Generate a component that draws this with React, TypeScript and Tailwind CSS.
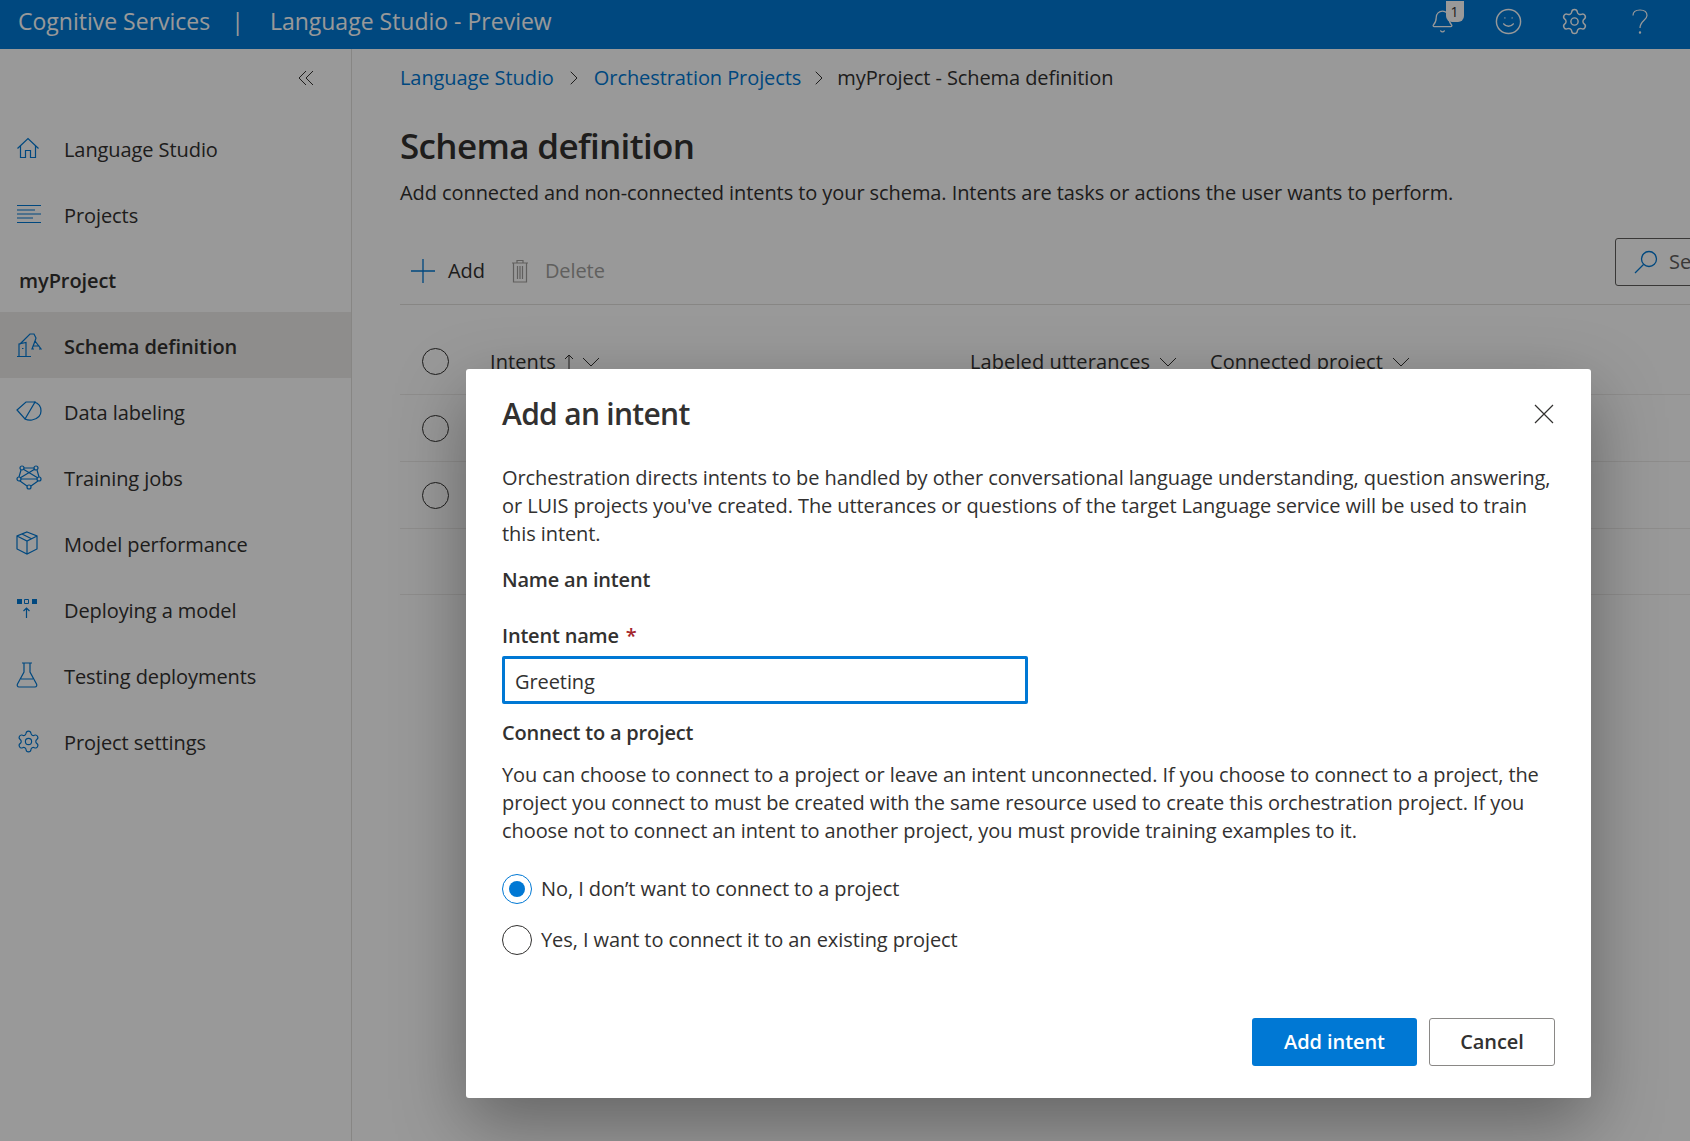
import { ChevronRight, Settings, Smile, Bell } from 'lucide-react'
import type { ReactNode } from 'react'

function HomeIcon() {
  return (
    <svg width="24" height="24" viewBox="0 0 24 24" fill="none" stroke="#0078d4" strokeWidth="1.2">
      <path d="M1.5 12.5 12 2.5l10.5 10M4.500 10v11.500h5v-7h5v7h5V10" />
    </svg>
  )
}

function ListIcon() {
  return (
    <svg width="26" height="20" viewBox="0 0 26 20" fill="none" stroke="#0078d4" strokeWidth="1.1">
      <path d="M1 1.500h24M1 6h18M1 10h24M1 14h16M1 18.500h24" />
    </svg>
  )
}

function RobotIcon() {
  return (
    <svg width="26" height="26" viewBox="0 0 26 26" fill="none" stroke="#0078d4" strokeWidth="1.2">
      <path d="M1 24.500h14M3 24V12l7-1.500V24M4 12l10-10 4 0 2 4-1 3M6 16.500h1.500" />
      <path d="M19 9l-3 8h2M19 9l6 8h-2M17.500 14h6" />
    </svg>
  )
}

function TagIcon() {
  return (
    <svg width="26" height="22" viewBox="0 0 26 22" fill="none" stroke="#0078d4" strokeWidth="1.2">
      <path d="M1 10 10 2h9l-10 17z" />
      <path d="M9 19c2 1 4 1.500 7 1 5-1 9-4 9-9 0-5-3-8-7-9" />
    </svg>
  )
}

function NetworkIcon() {
  return (
    <svg width="26" height="26" viewBox="0 0 26 26" fill="none" stroke="#0078d4" strokeWidth="1.2">
      <circle cx="6" cy="4" r="2" />
      <circle cx="20" cy="4" r="2" />
      <circle cx="3" cy="15" r="2" />
      <circle cx="23" cy="15" r="2" />
      <circle cx="13" cy="23" r="2" />
      <path d="M8 4h10M5 6l-2 7M21 6l2 7M7 5l15 9M19 5 4 14M5 15h16M4 17l7 5M22 17l-7 5" />
    </svg>
  )
}

function CubeIcon() {
  return (
    <svg width="22" height="24" viewBox="0 0 22 24" fill="none" stroke="#0078d4" strokeWidth="1.2">
      <path d="M11 1 21 5v13l-10 5-10-5V5zM1 5l10 5 10-5M11 10v13M6 3l10 5" />
    </svg>
  )
}

function DeployIcon() {
  return (
    <svg width="22" height="22" viewBox="0 0 22 22" fill="none">
      <path d="M1 1h5v5H1zM16 1h5v5h-5z" fill="#0078d4" />
      <path d="M8.500 1.500h4v4h-4z" stroke="#0078d4" />
      <path d="M10.500 20V10M7.500 13l3-3 3 3" stroke="#0078d4" strokeWidth="1.2" />
    </svg>
  )
}

function FlaskIcon() {
  return (
    <svg width="22" height="26" viewBox="0 0 22 26" fill="none" stroke="#0078d4" strokeWidth="1.2">
      <path d="M6 1h10M8 1v9L1.500 22c-.8 1.500 0 3 1.500 3h16c1.500 0 2.300-1.500 1.500-3L14 10V1M5 17h12" />
    </svg>
  )
}

function TrashIcon() {
  return (
    <svg width="18" height="24" viewBox="0 0 18 24" fill="none" stroke="#a19f9d" strokeWidth="1.2">
      <path d="M1 4h16M6 4V1.500h6V4M2.500 4v19h13V4M6.500 7v13M9 7v13M11.500 7v13" />
    </svg>
  )
}

function PlusIcon() {
  return (
    <svg width="24" height="24" viewBox="0 0 24 24" fill="none" stroke="#0078d4" strokeWidth="1.3">
      <path d="M12 0v24M0 12h24" />
    </svg>
  )
}

function SearchIcon() {
  return (
    <svg width="24" height="24" viewBox="0 0 24 24" fill="none" stroke="#0078d4" strokeWidth="1.3">
      <circle cx="15" cy="9" r="7.500" />
      <path d="M9.500 14.500 1 23" />
    </svg>
  )
}

function ChevDown() {
  return (
    <svg width="18" height="10" viewBox="0 0 18 10" fill="none" stroke="#323130" strokeWidth="1">
      <path d="M1 1l8 8 8-8" />
    </svg>
  )
}

function ArrowUpThin() {
  return (
    <svg width="10" height="16" viewBox="0 0 10 16" fill="none" stroke="#323130" strokeWidth="1">
      <path d="M5 16V1M1 5l4-4 4 4" />
    </svg>
  )
}

function QuestionMark() {
  return (
    <svg width="16" height="25" viewBox="0 0 16 25" fill="none" stroke="white" strokeWidth="1.2">
      <path d="M1 6.500C1 3 4 1 8 1s7 2 7 5.500C15 11 8 12 8 19" />
      <circle cx="8" cy="23.500" r="0.600" fill="white" />
    </svg>
  )
}

function NavRow({ icon, label, active }: { icon: ReactNode; label: string; active?: boolean }) {
  return (
    <div className={`flex h-[66px] items-center ${active ? 'bg-[#edebe9] font-semibold' : ''}`}>
      <div className="flex w-[64px] shrink-0 justify-start pl-4">{icon}</div>
      <span className="pt-[3px]">{label}</span>
    </div>
  )
}

function Radio({ checked, label }: { checked?: boolean; label: string }) {
  return (
    <div className="flex h-[51px] items-center gap-[9px]">
      <span
        className={`flex h-[30px] w-[30px] items-center justify-center rounded-full border ${
          checked ? 'border-[#0078d4]' : 'border-[#323130]'
        }`}
      >
        {checked && <span className="h-[16px] w-[16px] rounded-full bg-[#0078d4]" />}
      </span>
      <span>{label}</span>
    </div>
  )
}

export default function App() {
  return (
    <div
      className="relative flex h-screen flex-col overflow-hidden bg-white text-[20px] tracking-[-0.08px] text-[#323130]"
      style={{ fontFamily: '"Open Sans", "Noto Sans", sans-serif' }}
    >
      <header className="flex h-[49px] shrink-0 items-center bg-[#0078d4] pb-[6px] pl-[18px] text-[23px] tracking-normal text-white">
        <span>Cognitive Services</span>
        <span className="ml-[21px]">|</span>
        <span className="ml-[26px]">Language Studio - Preview</span>
        <div className="ml-auto flex items-center pr-[17px]">
          <div className="flex w-[66px] justify-center">
            <div className="relative">
              <Bell size={25} strokeWidth={1.2} />
              <span className="absolute -right-[9px] -top-[8px] flex h-[21px] w-[18px] items-center justify-center rounded-b-md bg-white text-[14px] text-[#323130]">
                1
              </span>
            </div>
          </div>
          <div className="flex w-[66px] justify-center">
            <Smile size={29} strokeWidth={1.2} />
          </div>
          <div className="flex w-[66px] justify-center">
            <Settings size={29} strokeWidth={1.2} />
          </div>
          <div className="flex w-[66px] justify-center">
            <QuestionMark />
          </div>
        </div>
      </header>

      <div className="flex min-h-0 flex-1">
        <aside className="w-[352px] shrink-0 border-r border-[#e1dfdd]">
          <div className="flex h-[54px] items-center justify-end pr-[37px] pt-[4px]">
            <svg width="16" height="16" viewBox="0 0 16 16" fill="none" stroke="#323130" strokeWidth="1">
              <path d="M8 1 1 8l7 7M15 1 8 8l7 7" />
            </svg>
          </div>
          <div className="h-[12px]" />
          <NavRow icon={<HomeIcon />} label="Language Studio" />
          <NavRow icon={<ListIcon />} label="Projects" />
          <div className="flex h-[65px] items-center pl-[19px] pt-[2px] font-semibold">myProject</div>
          <NavRow active icon={<RobotIcon />} label="Schema definition" />
          <NavRow icon={<TagIcon />} label="Data labeling" />
          <NavRow icon={<NetworkIcon />} label="Training jobs" />
          <NavRow icon={<CubeIcon />} label="Model performance" />
          <NavRow icon={<DeployIcon />} label="Deploying a model" />
          <NavRow icon={<FlaskIcon />} label="Testing deployments" />
          <NavRow icon={<Settings size={25} strokeWidth={1.1} color="#0078d4" />} label="Project settings" />
        </aside>

        <main className="min-w-0 flex-1 overflow-hidden pl-[48px]">
          <div className="w-[1400px]">
            <nav className="flex h-[58px] items-center">
              <span className="text-[#0078d4]">Language Studio</span>
              <ChevronRight size={24} strokeWidth={1} className="mx-[8px]" />
              <span className="text-[#0078d4]">Orchestration Projects</span>
              <ChevronRight size={24} strokeWidth={1} className="mx-[6px]" />
              <span>myProject - Schema definition</span>
            </nav>
            <h1 className="mt-[14px] text-[35px] leading-[50px] font-semibold tracking-[-0.65px]">Schema definition</h1>
            <p className="mt-[8px] leading-[28px]">
              Add connected and non-connected intents to your schema. Intents are tasks or actions the user wants to
              perform.
            </p>
            <div className="mt-[22px] flex h-[76px] items-center border-b border-[#e1dfdd] pt-[9px]">
              <span className="ml-[11px]"><PlusIcon /></span>
              <span className="ml-[13px]">Add</span>
              <span className="ml-[26px]"><TrashIcon /></span>
              <span className="ml-[16px] text-[#a19f9d]">Delete</span>
              <div className="relative -top-[9px] ml-auto flex h-[48px] w-[185px] items-center gap-[11px] rounded-[3px] border border-[#605e5c] pl-[18px]">
                <SearchIcon />
                <span className="text-[#605e5c]">Search</span>
              </div>
            </div>
            <div className="flex h-[90px] items-center border-b border-[#edebe9] pt-[24px] tracking-[0.1px]">
              <span className="ml-[22px] h-[27px] w-[27px] rounded-full border border-[#323130]" />
              <span className="ml-[41px] flex w-[480px] items-center gap-[8px]">
                Intents <ArrowUpThin /> <ChevDown />
              </span>
              <span className="flex w-[240px] items-center gap-[9px]">
                Labeled utterances <ChevDown />
              </span>
              <span className="flex items-center gap-[9px]">
                Connected project <ChevDown />
              </span>
            </div>
            {[0, 1].map((row) => (
              <div key={row} className="flex h-[67px] items-center border-b border-[#edebe9]">
                <span className="ml-[22px] h-[27px] w-[27px] rounded-full border border-[#323130]" />
              </div>
            ))}
            <div className="h-[66px] border-b border-[#edebe9]" />
          </div>
        </main>
      </div>

      <div className="absolute inset-0 bg-black/40" />

      <div className="absolute left-[466px] top-[369px] h-[729px] w-[1125px] rounded-[3px] bg-white px-[36px] shadow-[0_25px_70px_rgba(0,0,0,0.35)]">
        <div className="flex h-[88px] items-center justify-between">
          <h2 className="text-[30px] font-semibold tracking-[-0.7px]">Add an intent</h2>
          <svg width="20" height="20" viewBox="0 0 20 20" fill="none" stroke="#323130" strokeWidth="1.2" className="mr-[1px] mt-[2px]">
            <path d="M1 1l18 18M19 1 1 19" />
          </svg>
        </div>
        <p className="mt-[7px] leading-[28px]">
          Orchestration directs intents to be handled by other conversational language understanding, question answering,
          <br />
          or LUIS projects you've created. The utterances or questions of the target Language service will be used to train
          <br />
          this intent.
        </p>
        <div className="mt-[18px] leading-[28px] font-semibold tracking-[-0.2px]">Name an intent</div>
        <div className="mt-[28px] leading-[28px] font-semibold tracking-[-0.2px]">
          Intent name <span className="ml-[2px] text-[#a4262c]">*</span>
        </div>
        <div className="mt-[6px] flex h-[48px] w-[526px] items-center rounded-[2px] border-[3px] border-[#0078d4] pl-[10px] pt-[4px]">
          Greeting
        </div>
        <div className="mt-[15px] leading-[28px] font-semibold tracking-[-0.2px]">Connect to a project</div>
        <p className="mt-[14px] leading-[28px]">
          You can choose to connect to a project or leave an intent unconnected. If you choose to connect to a project, the
          <br />
          project you connect to must be created with the same resource used to create this orchestration project. If you
          <br />
          choose not to connect an intent to another project, you must provide training examples to it.
        </p>
        <div className="mt-[18px]">
          <Radio checked label="No, I don’t want to connect to a project" />
          <Radio label="Yes, I want to connect it to an existing project" />
        </div>
        <div className="mt-[53px] flex justify-end gap-[12px]">
          <button type="button" className="h-[48px] w-[165px] rounded-[3px] bg-[#0078d4] font-semibold text-white">
            Add intent
          </button>
          <button type="button" className="h-[48px] w-[126px] rounded-[3px] border border-[#8a8886] font-semibold">
            Cancel
          </button>
        </div>
      </div>
    </div>
  )
}
